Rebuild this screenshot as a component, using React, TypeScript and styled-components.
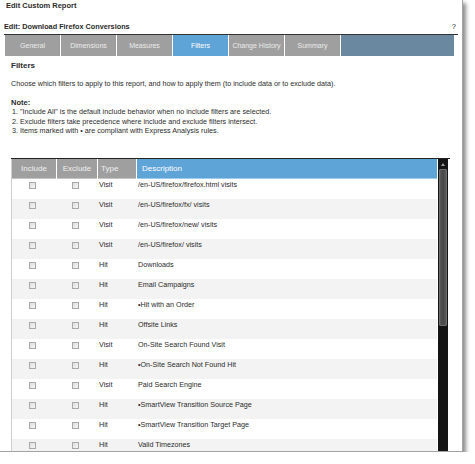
import styled, { createGlobalStyle } from "styled-components";

const GlobalStyle = createGlobalStyle`
  html, body {
    margin: 0;
    padding: 0;
    background: #ffffff;
  }
  body {
    font-family: "Liberation Sans", Arial, sans-serif;
    color: #2b2b2b;
  }
`;

const Frame = styled.div`
  width: 463px;
  height: 452px;
  padding-top: 1px;
  box-sizing: border-box;
  background: #ffffff;
  border-right: 1px solid #a3a3a3;
  border-bottom: 1px solid #a3a3a3;
  box-shadow: 3px 3px 4px rgba(0, 0, 0, 0.45);
  overflow: hidden;
`;

const PageTitle = styled.div`
  padding-left: 6px;
  font-size: 7.5px;
  line-height: 10px;
  font-weight: bold;
`;

const SubHeader = styled.div`
  display: flex;
  justify-content: space-between;
  margin: 10px 4px 0 4px;
  padding: 1px 2px 3px 0;
  line-height: 9px;
  border-bottom: 1.5px solid #333333;
`;

const ReportName = styled.span`
  font-size: 7.3px;
  font-weight: bold;
`;

const Help = styled.span`
  font-size: 7.5px;
`;

const TabBar = styled.div`
  display: flex;
  gap: 1px;
  margin: 0 8px 0 5px;
  height: 21px;
  border-bottom: 1px solid #ffffff;
`;

const Tab = styled.div<{ $active?: boolean; $filler?: boolean }>`
  width: ${(p) => (p.$filler ? "auto" : "55px")};
  flex: ${(p) => (p.$filler ? 1 : "none")};
  display: flex;
  align-items: center;
  justify-content: center;
  font-size: 7px;
  color: ${(p) => (p.$active ? "#ffffff" : "#ececec")};
  background: ${(p) =>
    p.$filler ? "#6a889f" : p.$active ? "#5fa4d7" : "#9f9f9f"};
`;

const Content = styled.div`
  padding-left: 11px;
`;

const Heading = styled.div`
  margin-top: 4px;
  font-size: 8px;
  line-height: 10px;
  font-weight: bold;
`;

const Intro = styled.div`
  margin-top: 8px;
  font-size: 7.2px;
  line-height: 9.5px;
`;

const NoteTitle = styled.div`
  margin-top: 9px;
  font-size: 7.5px;
  line-height: 9.5px;
  font-weight: bold;
`;

const NoteList = styled.ol`
  margin: 0;
  padding: 0 0 0 1px;
  list-style-position: inside;
  font-size: 7.2px;
  line-height: 9.6px;
`;

const TableArea = styled.div`
  margin-top: 22px;
  width: 439px;
  border-top: 1.5px solid #222222;
  display: flex;
  align-items: flex-start;
`;

const Table = styled.div`
  width: 425px;
  border-left: 1px solid #cfcfcf;
`;

const Row = styled.div<{ $shade?: boolean }>`
  display: grid;
  grid-template-columns: 44px 40px 38px 1fr;
  column-gap: 1px;
  height: 20px;
  background: ${(p) => (p.$shade ? "#f3f3f3" : "#ffffff")};
  font-size: 7.2px;
  line-height: 9px;
`;

const HeaderRow = styled(Row)`
  height: 20px;
  background: #ffffff;
  font-size: 8px;
`;

const HeadCell = styled.div<{ $align?: "center" | "left"; $blue?: boolean }>`
  display: flex;
  align-items: center;
  justify-content: ${(p) => (p.$align === "left" ? "flex-start" : "center")};
  padding-left: ${(p) => (p.$align === "left" ? (p.$blue ? "5px" : "3px") : "0")};
  background: ${(p) => (p.$blue ? "#5fa4d7" : "#9f9f9f")};
  color: ${(p) => (p.$blue ? "#ffffff" : "#efefef")};
  border-bottom: 1px solid ${(p) => (p.$blue ? "#9ccbec" : "#c4c4c4")};
`;

const CheckCell = styled.div`
  display: flex;
  justify-content: center;
  padding: 3px 3px 0 0;
`;

const Check = styled.input.attrs({ type: "checkbox" })`
  appearance: none;
  margin: 0;
  width: 7px;
  height: 7px;
  border: 1px solid #a9a9a9;
  background: linear-gradient(135deg, #dedede, #f6f6f6);
  box-sizing: border-box;
`;

const TextCell = styled.div`
  padding: 1.2px 0 0 1px;
  white-space: nowrap;
`;

const ScrollBar = styled.div`
  margin-left: 1px;
  width: 10px;
  height: 300px;
  background: #141414;
  display: flex;
  flex-direction: column;
  align-items: center;
  padding-top: 1px;
  box-sizing: border-box;
`;

const ScrollButton = styled.div`
  width: 9px;
  height: 9px;
  display: flex;
  align-items: center;
  justify-content: center;
  &::before {
    content: "";
    border-left: 2.5px solid transparent;
    border-right: 2.5px solid transparent;
    border-bottom: 3px solid #9a9a9a;
  }
`;

const Thumb = styled.div`
  width: 8px;
  height: 157px;
  box-sizing: border-box;
  border: 1px solid #6e6e6e;
  border-radius: 1px;
  background: linear-gradient(90deg, #5a5a5a, #474747 50%, #5a5a5a);
`;

const tabs = [
  "General",
  "Dimensions",
  "Measures",
  "Filters",
  "Change History",
  "Summary",
];

const notes = [
  "\"Include All\" is the default include behavior when no include filters are selected.",
  "Exclude filters take precedence where include and exclude filters intersect.",
  "Items marked with \u2022 are compliant with Express Analysis rules.",
];

const filters = [
  { type: "Visit", desc: "/en-US/firefox/firefox.html visits" },
  { type: "Visit", desc: "/en-US/firefox/fx/ visits" },
  { type: "Visit", desc: "/en-US/firefox/new/ visits" },
  { type: "Visit", desc: "/en-US/firefox/ visits" },
  { type: "Hit", desc: "Downloads" },
  { type: "Hit", desc: "Email Campaigns" },
  { type: "Hit", desc: "\u2022Hit with an Order" },
  { type: "Hit", desc: "Offsite Links" },
  { type: "Visit", desc: "On-Site Search Found Visit" },
  { type: "Hit", desc: "\u2022On-Site Search Not Found Hit" },
  { type: "Visit", desc: "Paid Search Engine" },
  { type: "Hit", desc: "\u2022SmartView Transition Source Page" },
  { type: "Hit", desc: "\u2022SmartView Transition Target Page" },
  { type: "Hit", desc: "Valid Timezones" },
];

export default function App() {
  return (
    <>
      <GlobalStyle />
      <Frame>
        <PageTitle>Edit Custom Report</PageTitle>
        <SubHeader>
          <ReportName>Edit: Download Firefox Conversions</ReportName>
          <Help>?</Help>
        </SubHeader>
        <TabBar>
          {tabs.map((t) => (
            <Tab key={t} $active={t === "Filters"}>
              {t}
            </Tab>
          ))}
          <Tab $filler />
        </TabBar>
        <Content>
          <Heading>Filters</Heading>
          <Intro>
            Choose which filters to apply to this report, and how to apply them
            (to include data or to exclude data).
          </Intro>
          <NoteTitle>Note:</NoteTitle>
          <NoteList>
            {notes.map((n) => (
              <li key={n}>{n}</li>
            ))}
          </NoteList>
          <TableArea>
            <Table>
              <HeaderRow>
                <HeadCell>Include</HeadCell>
                <HeadCell>Exclude</HeadCell>
                <HeadCell $align="left">Type</HeadCell>
                <HeadCell $align="left" $blue>
                  Description
                </HeadCell>
              </HeaderRow>
              {filters.map((f, i) => (
                <Row key={f.desc} $shade={i % 2 === 1}>
                  <CheckCell>
                    <Check />
                  </CheckCell>
                  <CheckCell>
                    <Check />
                  </CheckCell>
                  <TextCell>{f.type}</TextCell>
                  <TextCell>{f.desc}</TextCell>
                </Row>
              ))}
            </Table>
            <ScrollBar>
              <ScrollButton />
              <Thumb />
            </ScrollBar>
          </TableArea>
        </Content>
      </Frame>
    </>
  );
}
